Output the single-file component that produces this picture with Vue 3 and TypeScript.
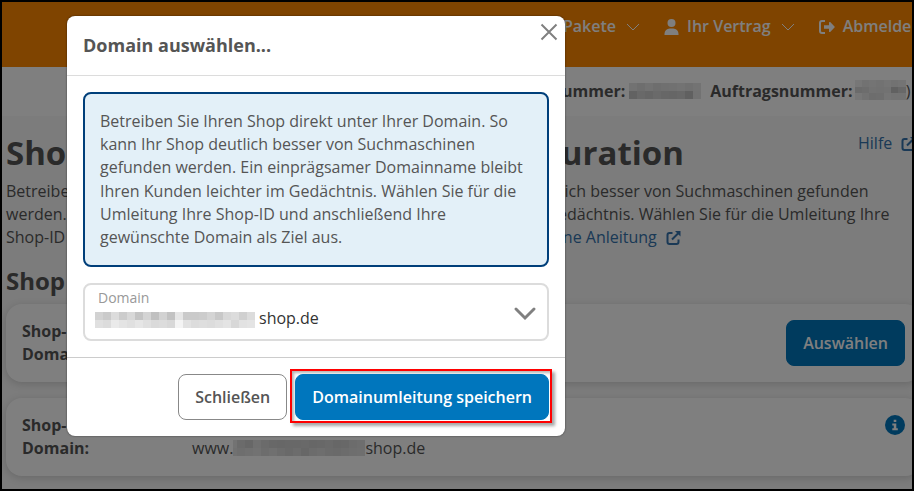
<!-- src/views/ShopDomainView.vue -->
<template>
  <div class="screen">
    <header class="topbar">
      <span class="nav-item">Pakete
        <svg class="chevron" viewBox="0 0 14 8"><path d="M1 1l6 6 6-6" /></svg>
      </span>
      <span class="nav-item nav-contract">
        <svg class="user" viewBox="0 0 14 16">
          <circle cx="7" cy="4" r="4" />
          <path d="M0 16v-1.2A5.2 5.2 0 0 1 5.2 9.6h3.6A5.2 5.2 0 0 1 14 14.8V16z" />
        </svg>
        Ihr Vertrag
        <svg class="chevron" viewBox="0 0 14 8"><path d="M1 1l6 6 6-6" /></svg>
      </span>
      <span class="nav-item nav-logout">
        <svg class="logout" viewBox="0 0 16 14">
          <path class="stroke" d="M6 1H3a2 2 0 0 0-2 2v8a2 2 0 0 0 2 2h3" />
          <path d="M5 5.2h5V2.6c0-.7.8-.9 1.2-.5l4.3 4.3c.4.4.4.8 0 1.2l-4.3 4.3c-.4.4-1.2.2-1.2-.5V8.8H5z" />
        </svg>
        Abmelde
      </span>
    </header>

    <div class="infobar">
      <b>ummer:</b>
      <span class="mosaic customer">
        <i v-for="(c, i) in customerCells" :key="i" :style="{ background: c }"></i>
      </span>
      <b class="order-label">Auftragsnummer:</b>
      <span class="mosaic order">
        <i v-for="(c, i) in orderCells" :key="i" :style="{ background: c }"></i>
      </span>
      <span>)</span>
    </div>

    <main class="content">
      <div class="title-row">
        <h1><span>Shop-</span><span>Konfiguration</span></h1>
        <a class="help">Hilfe
          <svg class="external" viewBox="0 0 14 14">
            <path class="stroke" d="M6 2H3a2 2 0 0 0-2 2v7a2 2 0 0 0 2 2h7a2 2 0 0 0 2-2V8.5M5.5 8.5L12 2" />
            <path d="M8.5 0H14v5.5z" />
          </svg>
        </a>
      </div>
      <p class="intro">
        {{ hint }}
        <a class="guide">Zur Online Anleitung
          <svg class="external" viewBox="0 0 14 14">
            <path class="stroke" d="M6 2H3a2 2 0 0 0-2 2v7a2 2 0 0 0 2 2h7a2 2 0 0 0 2-2V8.5M5.5 8.5L12 2" />
            <path d="M8.5 0H14v5.5z" />
          </svg>
        </a>
      </p>
      <h2>Shop Domain</h2>

      <section class="card">
        <div class="label">Shop-<br />Domain:</div>
        <div class="value"></div>
        <button class="btn primary">Auswählen</button>
      </section>
      <section class="card">
        <div class="label">Shop-ID<br />Domain:</div>
        <div class="value">
          <span>www.</span>
          <span class="mosaic site">
            <i v-for="(c, i) in siteCells" :key="i" :style="{ background: c }"></i>
          </span>
          <span>shop.de</span>
        </div>
        <svg class="info" viewBox="0 0 20 20">
          <circle cx="10" cy="10" r="10" />
          <path d="M8.7 4.7h2.6v2.4H8.7zM7.3 8.5h4v4.7h1.5v2H7.3v-2h1.5v-2.7H7.3z" />
        </svg>
      </section>
    </main>

    <div class="backdrop">
      <div class="modal" role="dialog">
        <div class="modal-header">
          <h3>Domain auswählen...</h3>
          <svg class="close" viewBox="0 0 18 18"><path d="M1.5 1.5l15 15M16.5 1.5l-15 15" /></svg>
        </div>
        <div class="modal-body">
          <div class="alert">{{ hint }}</div>
          <div class="select">
            <div class="select-text">
              <small>Domain</small>
              <div class="select-value">
                <span class="mosaic domain">
                  <i v-for="(c, i) in domainCells" :key="i" :style="{ background: c }"></i>
                </span>
                <span>shop.de</span>
              </div>
            </div>
            <svg class="arrow" viewBox="0 0 22 13"><path d="M2 2l9 9 9-9" /></svg>
          </div>
        </div>
        <div class="modal-footer">
          <button class="btn outline">Schließen</button>
          <div class="marked">
            <button class="btn primary">Domainumleitung speichern</button>
          </div>
        </div>
      </div>
    </div>
  </div>
</template>

<script setup lang="ts">
import { ref } from 'vue'

const hint = ref(
  'Betreiben Sie Ihren Shop direkt unter Ihrer Domain. So kann Ihr Shop deutlich besser von Suchmaschinen gefunden werden. ' +
    'Ein einprägsamer Domainname bleibt Ihren Kunden leichter im Gedächtnis. Wählen Sie für die Umleitung Ihre Shop-ID und ' +
    'anschließend Ihre gewünschte Domain als Ziel aus.'
)

// Graustufen der verpixelten Bereiche, zeilenweise
const toCells = (rows: string): string[] => rows.split(' ').map((c) => '#' + c.repeat(3))

const domainCells = toCells(
  'd2 ca dc cc d8 c4 d4 c0 d2 c2 e6 ca ca cc d4 c8 d8 dc d0 dc ' +
    'e0 dc ea e4 e0 e6 e0 da dc d8 f4 e2 dc de dc e0 e4 d8 e2 e4'
)
const customerCells = toCells('e4 dc e4 dc e0 e2 e6 e0 e6 c4 d2 cc d4 ce cc d0 c0 e4')
const orderCells = toCells('ee e4 e8 e4 ea e4 e8 d6 da e4 e2 e4 c2 d0 ee e4 da dc ea e6 e6')
const siteCells = toCells(
  'e6 d6 ce e0 d6 d0 ce d0 d0 d2 ce d0 d4 ce d0 d8 dc ' +
    'e2 dc e0 e4 da e0 d8 d2 d8 ce d8 dc d6 d4 d8 dc de'
)
</script>

<style scoped>
.screen {
  position: relative;
  width: 914px;
  height: 491px;
  box-sizing: border-box;
  border: 2px solid #000;
  overflow: hidden;
  background: #f8f8f8;
  color: #555;
  font-family: 'Open Sans', 'Noto Sans', sans-serif;
  font-size: 16px;
  line-height: 23.2px;
}

svg {
  flex: none;
}

.topbar {
  display: flex;
  height: 65px;
  padding: 13px 0 0 561px;
  box-sizing: border-box;
  background: #ff8800;
  color: #fff;
  font-weight: 600;
  white-space: nowrap;
}

.nav-item {
  display: flex;
  align-items: center;
  height: 23px;
}

.nav-contract {
  margin-left: 24px;
}

.nav-logout {
  margin-left: 24px;
}

.chevron {
  width: 14px;
  height: 8px;
  margin-left: 10px;
  fill: none;
  stroke: #fff;
}

.user {
  width: 15px;
  height: 16px;
  margin-right: 8px;
  fill: #fff;
}

.logout {
  width: 16px;
  height: 14px;
  margin-right: 8px;
  fill: #fff;
}

.logout .stroke {
  fill: none;
  stroke: #fff;
  stroke-width: 2;
}

.infobar {
  display: flex;
  align-items: center;
  height: 49px;
  padding-left: 560px;
  box-sizing: border-box;
  background: #fff;
  white-space: nowrap;
}

.infobar b {
  font-weight: 700;
}

.mosaic {
  display: grid;
  flex: none;
  grid-auto-rows: 8px;
  overflow: hidden;
}

.customer {
  grid-template-columns: repeat(9, 8px);
  margin: -2px 9px 0 4px;
}

.order {
  grid-template-columns: repeat(7, 7.3px);
  grid-auto-rows: 6.6px;
  margin: -3px 0 0 2px;
}

.site {
  width: 132px;
  grid-template-columns: 4px repeat(16, 8px);
}

.domain {
  grid-template-columns: repeat(20, 8px);
}

.content {
  width: 915px;
  padding: 14px 0 0 4px;
}

.title-row {
  display: flex;
  justify-content: space-between;
}

h1 {
  display: flex;
  justify-content: space-between;
  width: 678px;
  height: 50px;
  margin: 0;
  font-size: 33px;
  font-weight: 700;
  line-height: 46px;
}

.help {
  width: 63px;
  padding-top: 2px;
  white-space: nowrap;
}

a {
  color: #3473ac;
}

.external {
  width: 15px;
  height: 14px;
  margin-left: 5px;
  vertical-align: -2px;
  fill: currentColor;
}

.external .stroke {
  fill: none;
  stroke: currentColor;
  stroke-width: 2;
}

.intro {
  margin: 0;
}

.guide {
  margin-left: 16px;
}

h2 {
  height: 54px;
  margin: 0;
  padding-top: 13px;
  box-sizing: border-box;
  font-size: 24px;
  font-weight: 700;
  line-height: 36px;
}

.card {
  display: flex;
  align-items: flex-start;
  height: 78px;
  margin-bottom: 16px;
  padding: 16px;
  box-sizing: border-box;
  border-radius: 16px;
  background: #fff;
  box-shadow: 0 2px 8px rgba(0, 0, 0, 0.16);
}

.label {
  width: 170px;
  font-weight: 700;
}

.value {
  display: flex;
  flex: 1;
  align-items: center;
  padding-top: 23px;
}

.info {
  width: 20px;
  height: 20px;
  margin-top: 1px;
  fill: #0076bd;
}

.info path {
  fill: #fff;
}

.btn {
  height: 46px;
  padding: 0 16px;
  border: 1px solid #0076bd;
  border-radius: 8px;
  font: 600 16px 'Open Sans', 'Noto Sans', sans-serif;
  white-space: nowrap;
}

.primary {
  background: #0076bd;
  color: #fff;
}

.outline {
  border-color: #888;
  background: #fff;
  color: #555;
}

.backdrop {
  position: absolute;
  inset: 0;
  padding: 14px 0 0 65px;
  background: rgba(0, 0, 0, 0.5);
}

.modal {
  width: 498px;
  height: 420px;
  border-radius: 8px;
  background: #fff;
  box-shadow: 0 0 2px rgba(0, 0, 0, 0.6);
}

.modal-header {
  display: flex;
  justify-content: space-between;
  height: 60px;
  padding: 7px 7px 0 16px;
  box-sizing: border-box;
  border-bottom: 1px solid #dcdcdc;
}

h3 {
  margin: 10px 0 0;
  font-size: 18px;
  font-weight: 700;
  line-height: 25px;
}

.close {
  width: 18px;
  height: 18px;
  fill: none;
  stroke: #808080;
  stroke-width: 2;
}

.modal-body {
  padding: 16px;
}

.alert {
  height: 175px;
  padding: 16px 15px;
  box-sizing: border-box;
  border: 2px solid #003f7a;
  border-radius: 8px;
  background: #e3f0f8;
}

.select {
  display: flex;
  align-items: center;
  justify-content: space-between;
  height: 58px;
  margin-top: 16px;
  padding: 0 11px 0 10px;
  box-sizing: border-box;
  border: 2px solid #dcdcdc;
  border-radius: 8px;
}

.select-text {
  padding-bottom: 6px;
}

small {
  display: block;
  margin-left: 3px;
  color: #999;
  font-size: 14px;
  line-height: 19px;
}

.select-value {
  display: flex;
  align-items: center;
  gap: 4px;
  color: #333;
}

.select-value .mosaic {
  margin-top: 4px;
}

.arrow {
  width: 22px;
  height: 13px;
  margin-top: 2px;
  fill: none;
  stroke: #808080;
  stroke-width: 2.9;
  stroke-linecap: round;
}

.modal-footer {
  display: flex;
  align-items: flex-start;
  justify-content: flex-end;
  padding: 11px 13px 0 0;
  border-top: 1px solid #ccc;
}

.modal-footer .outline {
  margin: 5px 3px 0 0;
}

.marked {
  padding: 3px 1px 1px 3px;
  border: 2px solid #f00;
  box-shadow: 3px 3px 3px rgba(0, 0, 0, 0.35), inset 2px 2px 3px rgba(0, 0, 0, 0.3);
}

.marked .btn {
  display: block;
}
</style>

<style>
body {
  margin: 0;
}
</style>
